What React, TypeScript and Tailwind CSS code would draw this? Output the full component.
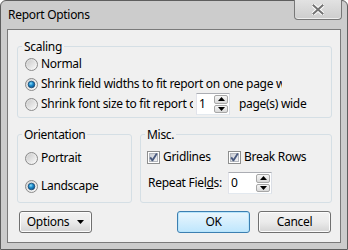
import React from 'react';

const Radio = ({ checked }: { checked?: boolean }) => (
  <svg width="13" height="13" viewBox="0 0 13 13" className="shrink-0">
    <defs>
      <linearGradient id="rdOuter" x1="0" y1="0" x2="1" y2="1">
        <stop offset="0" stopColor="#d4d4d4" />
        <stop offset="1" stopColor="#fbfbfb" />
      </linearGradient>
      <linearGradient id="rdInner" x1="0" y1="0" x2="1" y2="1">
        <stop offset="0" stopColor="#cbcbcb" />
        <stop offset="1" stopColor="#f7f7f7" />
      </linearGradient>
      <radialGradient id="rdDot" cx="0.4" cy="0.35" r="0.7">
        <stop offset="0" stopColor="#8fe1fb" />
        <stop offset="0.45" stopColor="#1d8ccd" />
        <stop offset="1" stopColor="#0b4d86" />
      </radialGradient>
    </defs>
    <circle cx="6.5" cy="6.5" r="6" fill="url(#rdOuter)" stroke="#8a8a8a" />
    <circle cx="6.5" cy="6.5" r="4.3" fill="url(#rdInner)" />
    {checked && <circle cx="6.5" cy="6.5" r="3.3" fill="url(#rdDot)" stroke="#1b4a72" strokeWidth="0.8" />}
  </svg>
);

const Check = () => (
  <svg width="13" height="13" viewBox="0 0 13 13" className="shrink-0">
    <defs>
      <linearGradient id="cbInner" x1="0" y1="0" x2="1" y2="1">
        <stop offset="0" stopColor="#c9ccd3" />
        <stop offset="1" stopColor="#f4f4f5" />
      </linearGradient>
    </defs>
    <rect x="0.5" y="0.5" width="12" height="12" fill="#fff" stroke="#8e8f8f" />
    <rect x="2.5" y="2.5" width="8" height="8" fill="url(#cbInner)" stroke="#b3b7be" />
    <path d="M3.2 6.4 L5.4 9.4 L9.8 2.6" fill="none" stroke="#48597e" strokeWidth="1.8" strokeLinejoin="round" />
  </svg>
);

const Arrow = ({ up }: { up?: boolean }) => (
  <svg width="7" height="4" viewBox="0 0 7 4">
    <path d={up ? 'M0 4 L3.5 0 L7 4 Z' : 'M0 0 L3.5 4 L7 0 Z'} fill="#000" />
  </svg>
);

const Spin = ({ value, w }: { value: string; w: string }) => (
  <div className={`flex h-[22px] ${w} shrink-0 border border-[#abadb3] border-r-[#dbdfe6] border-b-[#e3e9ef] border-l-[#e2e3ea] bg-white`}>
    <div className="flex-1 pl-[2px] leading-[20px]">{value}</div>
    <div className="flex w-[15px] flex-col gap-[1px] py-[1px] pr-[1px]">
      <div className="flex flex-1 items-center justify-center rounded-[2px] border border-[#a7a7a7] bg-gradient-to-b from-[#f6f6f6] to-[#d9d9d9]">
        <Arrow up />
      </div>
      <div className="flex flex-1 items-center justify-center rounded-[2px] border border-[#a7a7a7] bg-gradient-to-b from-[#f6f6f6] to-[#d9d9d9]">
        <Arrow />
      </div>
    </div>
  </div>
);

const Group = ({ title, className, children }: { title: string; className: string; children: React.ReactNode }) => (
  <fieldset className={`shrink-0 rounded-[3px] border border-[#d5dfe5] ${className}`}>
    <legend className="ml-[4px] px-[2px] leading-[15px]">{title}</legend>
    {children}
  </fieldset>
);

const Button = ({ children, primary }: { children: React.ReactNode; primary?: boolean }) => (
  <button
    className={
      primary
        ? 'flex h-[22px] w-[73px] items-center justify-center rounded-[3px] border border-[#3c7fb1] bg-gradient-to-b from-[#eaf6fd] to-[#bee6fd] shadow-[inset_0_0_0_1px_#b8e5fc]'
        : 'flex h-[22px] w-[73px] items-center justify-center rounded-[3px] border border-[#707070] bg-gradient-to-b from-[#f2f2f2] via-[#ebebeb] to-[#d4d4d4] shadow-[inset_0_0_0_1px_#fcfcfc]'
    }
  >
    {children}
  </button>
);

export default function App() {
  return (
    <div className="h-[250px] w-[348px] overflow-hidden bg-white font-['Segoe_UI','Noto_Sans',sans-serif] text-[12px] tracking-[-0.3px] text-black">
      <div className="flex h-[250px] w-[348px] flex-col rounded-t-[6px] border border-[#5e5e5e] bg-[#cccccc] px-[6px] pb-[6px]">
        {/* title bar */}
        <div className="flex h-[28px] shrink-0 items-start">
          <div className="pl-[1px] pt-[6px] leading-[16px]">Report Options</div>
          <div className="ml-auto -mr-[1px] -mt-[1px] flex h-[20px] w-[48px] items-center justify-center rounded-b-[4px] border border-[#777] border-t-0 bg-gradient-to-b from-[#e2e2e2] to-[#cdcdcd] shadow-[inset_0_-1px_0_#eee]">
            <svg width="12" height="11" viewBox="0 0 12 11">
              <path d="M1.5 1.5 L10.5 9.5 M10.5 1.5 L1.5 9.5" stroke="#fff" strokeWidth="4" strokeLinecap="square" />
              <path d="M1.5 1.5 L10.5 9.5 M10.5 1.5 L1.5 9.5" stroke="#737373" strokeWidth="2" strokeLinecap="square" />
            </svg>
          </div>
        </div>

        {/* client area */}
        <div className="flex flex-1 flex-col border border-[#7a7a7a] bg-[#f0f0f0] pl-[9px] pt-[9px]">
          <Group title="Scaling" className="h-[79px] w-[315px]">
            <div className="flex flex-col pl-[7px]">
              <div className="flex h-[20px] items-center gap-[3px]">
                <Radio />
                <span>Normal</span>
              </div>
              <div className="flex h-[20px] items-center gap-[3px]">
                <Radio checked />
                <span className="w-[241px] overflow-hidden whitespace-nowrap">Shrink field widths to fit report on one page wide</span>
              </div>
              <div className="flex h-[20px] items-center gap-[3px]">
                <Radio />
                <span className="w-[152px] overflow-hidden whitespace-nowrap">Shrink font size to fit report on</span>
                <Spin value="1" w="w-[34px]" />
                <span className="ml-[6px]">page(s) wide</span>
              </div>
            </div>
          </Group>

          <div className="mt-[9px] flex gap-[8px]">
            <Group title="Orientation" className="h-[76px] w-[115px]">
              <div className="flex flex-col gap-[8px] pl-[7px] pt-[6px]">
                <div className="flex h-[20px] items-center gap-[3px]">
                  <Radio />
                  <span>Portrait</span>
                </div>
                <div className="flex h-[20px] items-center gap-[3px]">
                  <Radio checked />
                  <span>Landscape</span>
                </div>
              </div>
            </Group>
            <Group title="Misc." className="h-[76px] w-[192px]">
              <div className="flex flex-col gap-[5px] pl-[6px] pt-[5px]">
                <div className="flex h-[20px] items-center">
                  <div className="flex w-[81px] items-center gap-[3px]">
                    <Check />
                    <span>Gridlines</span>
                  </div>
                  <div className="flex items-center gap-[3px]">
                    <Check />
                    <span>Break Rows</span>
                  </div>
                </div>
                <div className="flex items-center">
                  <span className="w-[81px] pl-[1px]">
                    Repeat Fiel<span className="underline">d</span>s:
                  </span>
                  <Spin value="0" w="w-[44px]" />
                </div>
              </div>
            </Group>
          </div>

          <div className="mt-[8px] flex w-[315px] items-center pl-[2px] pr-[1px]">
            <Button>
              <span className="flex items-center gap-[8px]">
                Options
                <svg width="7" height="4" viewBox="0 0 7 4">
                  <path d="M0 0 L3.5 4 L7 0 Z" fill="#000" />
                </svg>
              </span>
            </Button>
            <div className="ml-auto flex gap-[8px]">
              <Button primary>OK</Button>
              <Button>Cancel</Button>
            </div>
          </div>
        </div>
      </div>
    </div>
  );
}
